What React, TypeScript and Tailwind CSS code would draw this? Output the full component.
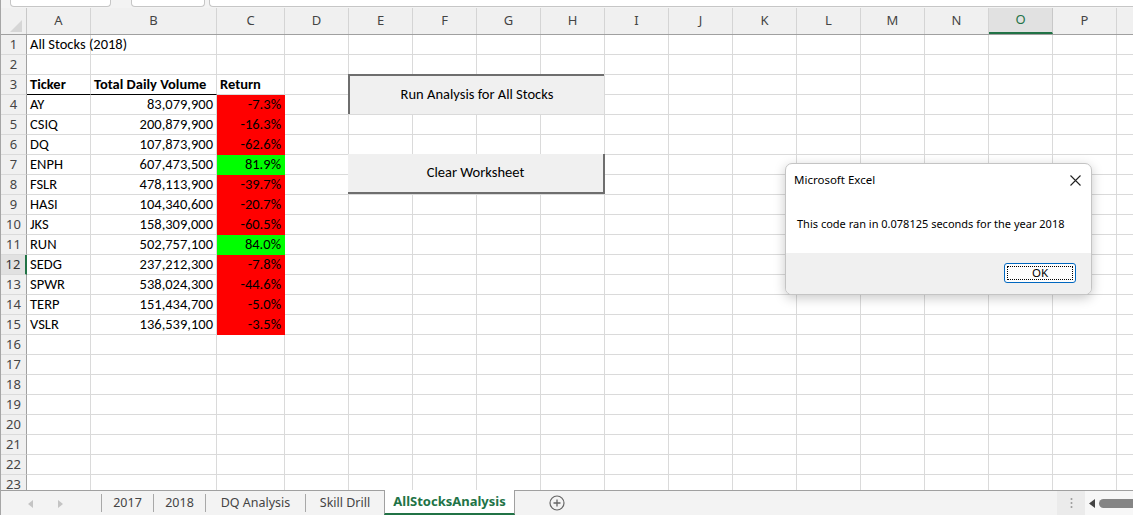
import React from "react";

type Col = { l: string; w: string };
const cols: Col[] = [
  { l: "A", w: "w-[64px]" },
  { l: "B", w: "w-[126px]" },
  { l: "C", w: "w-[68px]" },
  ...["D", "E", "F", "G", "H", "I", "J", "K", "L", "M", "N", "O", "P", ""].map((l) => ({ l, w: "w-[64px]" })),
];

const data: [string, string, string][] = [
  ["AY", "83,079,900", "-7.3%"],
  ["CSIQ", "200,879,900", "-16.3%"],
  ["DQ", "107,873,900", "-62.6%"],
  ["ENPH", "607,473,500", "81.9%"],
  ["FSLR", "478,113,900", "-39.7%"],
  ["HASI", "104,340,600", "-20.7%"],
  ["JKS", "158,309,000", "-60.5%"],
  ["RUN", "502,757,100", "84.0%"],
  ["SEDG", "237,212,300", "-7.8%"],
  ["SPWR", "538,024,300", "-44.6%"],
  ["TERP", "151,434,700", "-5.0%"],
  ["VSLR", "136,539,100", "-3.5%"],
];

function Cell({ r, ci, col }: { r: number; ci: number; col: Col }) {
  let text = "";
  let align = "justify-start";
  let bold = false;
  let cls = "border-[#dadada]";
  if (r === 1 && ci === 0) text = "All Stocks (2018)";
  if (r === 3) {
    if (ci === 0) text = "Ticker";
    if (ci === 1) text = "Total Daily Volume";
    if (ci === 2) text = "Return";
    if (ci <= 2) bold = true;
    if (ci <= 1) cls = "border-r-[#dadada] border-b-black";
  }
  if (r >= 4 && r <= 15 && ci <= 2) {
    const d = data[r - 4];
    text = d[ci];
    if (ci >= 1) align = "justify-end";
    if (ci === 2) {
      const pos = !d[2].startsWith("-");
      cls = pos ? "bg-[#00ff00] border-[#00ff00]" : "bg-[#ff0000] border-[#ff0000]";
    }
  }
  return (
    <div
      className={`${col.w} shrink-0 h-[20px] border-r border-b ${cls} flex items-end ${align} px-[3px] pb-[1px] text-[14.5px] leading-[17px] text-black font-['Carlito','Lato',sans-serif] whitespace-nowrap overflow-visible ${bold ? "font-bold" : ""}`}
    >
      {text}
    </div>
  );
}

function Row({ r }: { r: number }) {
  const sel = r === 12;
  return (
    <div className="flex h-[20px] shrink-0">
      <div
        className={`w-[26px] shrink-0 h-[20px] flex items-center justify-center border-b border-[#dadada] text-[13px] font-['Noto_Sans',sans-serif] ${
          sel ? "bg-[#e1e1e1] border-r-2 border-r-[#217346] text-[#333]" : "bg-[#f0f0f0] border-r border-r-[#a0a0a0] text-[#444]"
        }`}
      >
        {r}
      </div>
      {cols.map((c, i) => (
        <Cell key={i} r={r} ci={i} col={c} />
      ))}
    </div>
  );
}

export default function App() {
  const rows = Array.from({ length: 23 }, (_, i) => i + 1);
  return (
    <div className="relative w-[1133px] h-[515px] overflow-hidden bg-white border-l border-[#a6a6a6] flex flex-col font-['Noto_Sans',sans-serif]">
      {/* top formula strip */}
      <div className="h-[8px] shrink-0 bg-[#f3f3f3] flex items-start">
        <div className="ml-[9px] w-[101px] h-[7px] bg-white border border-t-0 border-[#c6c6c6] rounded-b-[4px]" />
        <div className="ml-[20px] w-[74px] h-[7px] bg-white border border-t-0 border-[#c6c6c6] rounded-b-[4px]" />
        <div className="ml-[4px] flex-1 h-[7px] bg-white border border-t-0 border-r-0 border-[#c6c6c6] rounded-bl-[4px]" />
      </div>

      {/* sheet */}
      <div className="flex-1 overflow-hidden flex flex-col">
        {/* column header */}
        <div className="flex h-[27px] shrink-0 bg-[#f0f0f0] border-b border-[#a0a0a0]">
          <div className="w-[26px] shrink-0 border-r border-[#c8c8c8] relative flex items-end justify-end pr-[4px] pb-[2px]">
            <svg width="12" height="12" viewBox="0 0 12 12">
              <polygon points="12,0 12,12 0,12" fill="#d6d6d6" />
            </svg>
          </div>
          {cols.map((c, i) => {
            const sel = c.l === "O";
            return (
              <div
                key={i}
                className={`${c.w} shrink-0 flex items-center justify-center text-[13px] ${
                  sel
                    ? "bg-[#e1e1e1] border-b-2 border-b-[#217346] border-r border-r-[#c8c8c8] text-[#217346]"
                    : "border-r border-[#d4d4d4] text-[#444]"
                }`}
              >
                {c.l}
              </div>
            );
          })}
        </div>
        {rows.map((r) => (
          <Row key={r} r={r} />
        ))}
      </div>

      {/* tab bar */}
      <div className="h-[25px] shrink-0 bg-[#f3f3f3] border-t border-[#a0a0a0] flex items-stretch text-[12.5px] text-[#444]">
        <div className="w-[100px] shrink-0 relative flex items-center">
          <svg className="absolute left-[27px] top-[9px]" width="6" height="8" viewBox="0 0 6 8">
            <polygon points="5,0 5,8 0,4" fill="#c4c4c4" />
          </svg>
          <svg className="absolute left-[56px] top-[9px]" width="6" height="8" viewBox="0 0 6 8">
            <polygon points="1,0 1,8 6,4" fill="#c4c4c4" />
          </svg>
        </div>
        <div className="w-px bg-[#a8a8a8] my-[3px]" />
        <div className="w-[51px] flex items-center justify-center">2017</div>
        <div className="w-px bg-[#a8a8a8] my-[3px]" />
        <div className="w-[51px] flex items-center justify-center">2018</div>
        <div className="w-px bg-[#a8a8a8] my-[3px]" />
        <div className="w-[99px] flex items-center justify-center">DQ Analysis</div>
        <div className="w-px bg-[#a8a8a8] my-[3px]" />
        <div className="w-[78px] flex items-center justify-center">Skill Drill</div>
        <div className="w-[131px] -mt-px bg-white border-x border-[#a0a0a0] border-b-2 border-b-[#217346] flex items-center justify-center font-bold text-[13px] text-[#217346]">
          AllStocksAnalysis
        </div>
        <div className="w-[84px] flex items-center justify-center">
          <svg width="16" height="16" viewBox="0 0 16 16">
            <circle cx="8" cy="8" r="7" fill="none" stroke="#666" strokeWidth="1.2" />
            <path d="M8 4.5v7M4.5 8h7" stroke="#666" strokeWidth="1.3" />
          </svg>
        </div>
        <div className="flex-1" />
        <div className="w-[28px] bg-[#ebebeb] flex items-center justify-center">
          <svg width="3" height="12" viewBox="0 0 3 12">
            <circle cx="1.5" cy="2" r="1" fill="#999" />
            <circle cx="1.5" cy="6" r="1" fill="#999" />
            <circle cx="1.5" cy="10" r="1" fill="#999" />
          </svg>
        </div>
        <div className="w-[48px] bg-[#f7f7f7] flex items-center pl-[4px] gap-[4px]">
          <svg width="6" height="9" viewBox="0 0 6 9">
            <polygon points="6,0 6,9 0,4.5" fill="#444" />
          </svg>
          <div className="flex-1 h-[9px] rounded-l-[5px] bg-[#858585]" />
        </div>
      </div>

      {/* form buttons */}
      <div className="absolute left-[347px] top-[74px] w-[256px] h-[40px] bg-[#f0f0f0] border-t-2 border-l-2 border-[#6e6e6e] flex items-center justify-center text-[14.5px] text-black font-['Carlito','Lato',sans-serif]">
        Run Analysis for All Stocks
      </div>
      <div className="absolute left-[347px] top-[154px] w-[257px] h-[40px] bg-[#f0f0f0] border-b-2 border-r-2 border-[#6e6e6e] flex items-center justify-center text-[14.5px] text-black font-['Carlito','Lato',sans-serif]">
        Clear Worksheet
      </div>

      {/* message box */}
      <div className="absolute left-[784px] top-[163px] w-[307px] h-[132px] bg-white rounded-[7px] border border-[#c4c4c4] shadow-[0_3px_12px_rgba(0,0,0,0.22)] overflow-hidden flex flex-col text-[11px] text-black">
        <div className="h-[31px] flex items-center justify-between pl-[8px] pr-[10px] pt-[1px]">
          <span className="text-[11.5px]">Microsoft Excel</span>
          <svg width="11" height="11" viewBox="0 0 11 11">
            <path d="M0.5 0.5L10.5 10.5M10.5 0.5L0.5 10.5" stroke="#222" strokeWidth="1.1" />
          </svg>
        </div>
        <div className="h-[58px] flex items-center pl-[11px]">This code ran in 0.078125 seconds for the year 2018</div>
        <div className="flex-1 bg-[#f0f0f0] flex items-start justify-end pr-[15px] pt-[10px]">
          <div className="w-[72px] h-[20px] rounded-[3px] border border-[#0067c0] bg-[#fdfdfd] p-[2px]">
            <div className="w-full h-full border border-dotted border-black flex items-center justify-center leading-none text-[11.5px]">OK</div>
          </div>
        </div>
      </div>
    </div>
  );
}
